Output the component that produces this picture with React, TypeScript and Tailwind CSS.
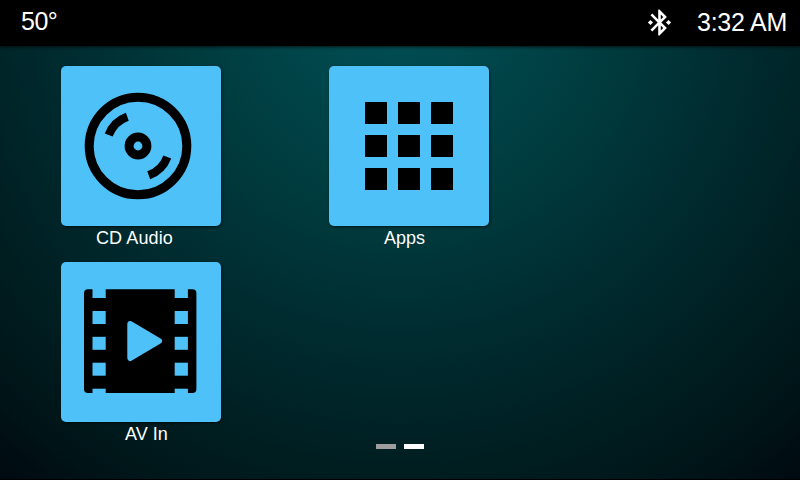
import type { ReactNode } from 'react';

function BluetoothIcon() {
  return (
    <svg className="h-[31px] w-[31px]" viewBox="0 0 24 24" fill="#fff">
      <path d="M7 12l-2-2-2 2 2 2 2-2zm10.710-4.290L12 2h-1v7.590L6.410 5 5 6.410 10.590 12 5 17.590 6.410 19 11 14.410V22h1l5.710-5.710-4.300-4.290 4.300-4.290zM13 5.830l1.880 1.880L13 9.590V5.830zm1.880 10.460L13 18.170v-3.760l1.880 1.880zM19 10l-2 2 2 2 2-2-2-2z" />
    </svg>
  );
}

function DiscIcon() {
  return (
    <svg className="h-40 w-40" viewBox="0 0 160 160" fill="none" stroke="#000" strokeWidth="9">
      <circle cx="77" cy="80" r="48.8" />
      <circle cx="77" cy="80" r="8.900" />
      <path d="M66.300 50.700A31.300 31.300 0 0 0 47.700 69M87.700 109.300A31.300 31.300 0 0 0 106.300 91" strokeWidth="8.400" />
    </svg>
  );
}

function AppsIcon() {
  return (
    <div className="grid h-40 grid-cols-[repeat(3,22px)] grid-rows-[repeat(3,22px)] gap-[11px] pt-9 pl-9">
      {Array.from({ length: 9 }, (_, i) => (
        <span key={i} className="bg-black" />
      ))}
    </div>
  );
}

function FilmIcon() {
  return (
    <svg className="h-40 w-40" viewBox="0 0 160 160">
      <rect x="23" y="27.200" width="112.400" height="103.700" rx="4" />
      <g fill="#4fc1f9">
        {[31.5, 113.7].map((x) => (
          <g key={x}>
            <rect x={x} y="26" width="13.200" height="10" />
            <rect x={x} y="49" width="13.200" height="13" />
            <rect x={x} y="74.800" width="13.200" height="13" />
            <rect x={x} y="100.700" width="13.200" height="13" />
            <rect x={x} y="126.700" width="13.200" height="6" />
          </g>
        ))}
        <path d="M69.300 62L98 79L69.300 96Z" stroke="#4fc1f9" strokeWidth="6" strokeLinejoin="round" />
      </g>
    </svg>
  );
}

function Tile({ label, labelPad, children }: { label: string; labelPad: string; children: ReactNode }) {
  return (
    <div className="h-[196px] w-40">
      <div className="h-40 w-40 overflow-hidden rounded-[5px] bg-[#4fc1f9] shadow-[1px_1px_3px_rgba(0,0,0,0.6)]">{children}</div>
      <div className={`text-[18px] leading-6 whitespace-nowrap text-white ${labelPad}`}>{label}</div>
    </div>
  );
}

export default function App() {
  return (
    <div className="flex h-[480px] w-[800px] flex-col overflow-hidden border-b border-black bg-[radial-gradient(circle_620px_at_400px_0px,#004c52_7%,#004549_19%,#00383b_39%,#002d31_53%,#002529_65%,#001d1f_77%,#001418_90%,#000a11_100%)] font-['Liberation_Sans',Arial,sans-serif] text-white">
      <header className="flex h-[46px] shrink-0 items-center justify-between bg-black pr-[13px] pl-[21px] text-[25px] leading-none tracking-[-0.5px] shadow-[0_1px_3px_rgba(0,0,0,0.7)]">
        <span className="pb-1">50°</span>
        <div className="flex items-center gap-[22px]">
          <span className="pb-px"><BluetoothIcon /></span>
          <span className="pb-0.5 tracking-[-0.25px]">3:32 AM</span>
        </div>
      </header>
      <main className="grid h-[398px] shrink-0 grid-cols-[268px_268px] grid-rows-[196px_196px] pt-5 pl-[61px]">
        <Tile label="CD Audio" labelPad="pl-[35px] tracking-[0.1px]"><DiscIcon /></Tile>
        <Tile label="Apps" labelPad="pl-[55px]"><AppsIcon /></Tile>
        <Tile label="AV In" labelPad="pl-16"><FilmIcon /></Tile>
      </main>
      <footer className="flex justify-center gap-2">
        <span className="h-[5px] w-5 bg-[#9e9e9e]" />
        <span className="h-[5px] w-5 bg-white" />
      </footer>
    </div>
  );
}
